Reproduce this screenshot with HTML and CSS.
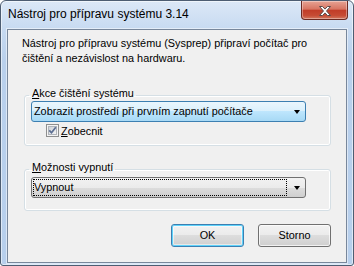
FILE: index.html
```html
<!DOCTYPE html>
<html>
<head>
<meta charset="utf-8">
<link rel="stylesheet" href="styles.css">
</head>
<body>
<div class="window">
  <div class="titlebar">
    <span class="title">Nástroj pro přípravu systému 3.14</span>
    <div class="close">
      <svg width="16" height="12" viewBox="0 0 16 12"><path d="M2.5 1.5h3l2.5 2.6 2.5-2.6h3l-4 4.5 4 4.5h-3l-2.5-2.6-2.5 2.6h-3l4-4.5z" fill="#fff" stroke="#5a4a48" stroke-width="1" stroke-linejoin="round"/></svg>
    </div>
  </div>
  <div class="client">
    <p class="desc">Nástroj pro přípravu systému (Sysprep) připraví počítač pro<br>čištění a nezávislost na hardwaru.</p>
    <fieldset class="group g1">
      <legend><u>A</u>kce čištění systému</legend>
      <div class="combo blue"><span class="ctext">Zobrazit prostředí při prvním zapnutí počítače</span><span class="arrow"></span></div>
      <label class="check">
        <svg class="box" width="13" height="13" viewBox="0 0 13 13">
          <defs><linearGradient id="cb" x1="0" y1="0" x2="1" y2="1"><stop offset="0" stop-color="#cbcfd5"/><stop offset="1" stop-color="#f6f6f6"/></linearGradient></defs>
          <rect x="0.5" y="0.5" width="12" height="12" fill="#f4f4f4" stroke="#8e8f8f"/>
          <rect x="2.5" y="2.5" width="8" height="8" fill="url(#cb)" stroke="#b0b4ba"/>
          <path d="M3.3 6.4l2.2 2.4 4.3-5.6" fill="none" stroke="#5b6e92" stroke-width="1.7"/>
        </svg>
        <span><u>Z</u>obecnit</span>
      </label>
    </fieldset>
    <fieldset class="group g2">
      <legend><u>M</u>ožnosti vypnutí</legend>
      <div class="combo gray"><span class="ctext focus">Vypnout</span><span class="arrow"></span></div>
    </fieldset>
    <div class="buttons">
      <div class="btn default">OK</div>
      <div class="btn">Storno</div>
    </div>
  </div>
</div>
</body>
</html>
```
FILE: styles.css
```css
* { box-sizing: border-box; }
html, body { margin: 0; padding: 0; background: #fff; }
body {
  font-family: "Liberation Sans", Arial, sans-serif;
  font-size: 10.85px;
  color: #000;
}
.window {
  width: 354px;
  height: 266px;
  border: 1px solid #4d5d72;
  border-radius: 6px 6px 3px 3px;
  background: linear-gradient(#dce8f7 0px, #c7daf1 28px, #b9d0ec 60px, #b7cfec 100%);
  box-shadow: inset 0 0 0 1px rgba(255,255,255,0.55);
  display: flex;
  flex-direction: column;
  position: relative;
}
.titlebar {
  height: 28px;
  padding: 6px 0 0 7px;
  line-height: 15px;
  font-size: 12px;
}
.title { color: #000; }
.close {
  position: absolute;
  top: 0;
  right: 5px;
  width: 47px;
  height: 19px;
  border: 1px solid #6b2a22;
  border-top: none;
  border-radius: 0 0 4px 4px;
  background: linear-gradient(#e6a394 0%, #d77562 45%, #c13d28 52%, #c64b34 80%, #d2785f 100%);
  box-shadow: inset 0 0 0 1px rgba(255,255,255,0.35);
  display: flex;
  align-items: center;
  justify-content: center;
}
.close svg { display: block; margin-top: 1px; }
.client {
  margin: 0 6px 2px 6px;
  flex: 1;
  border: 1px solid #78879b;
  background: #f0f0f0;
  display: flex;
  flex-direction: column;
  box-shadow: 0 0 0 1px rgba(255,255,255,0.5);
}
.desc {
  margin: 6px 0 0 14px;
  line-height: 15px;
}
.group {
  margin: 21px 15px 0 16px;
  border: 1px solid #d5dfe5;
  border-radius: 3px;
  padding: 0 0 8px 6px;
  min-width: 0;
  box-shadow: inset 0 0 0 1px #fff;
}
.group legend {
  line-height: 12px;
  height: 16px;
  padding: 0 2px 4px 3px;
  margin-left: -2px;
}
.g1 .combo { margin-top: -2px; }
.g2 { margin-top: 15px; padding-bottom: 12px; }
.combo {
  width: 275px;
  height: 21px;
  border: 1px solid #707070;
  border-radius: 3px;
  display: flex;
  align-items: center;
  padding: 0 4px 0 1px;
}
.combo.blue {
  border-color: #3c7fb1;
  background: linear-gradient(#eaf6fd 0%, #d9f0fc 50%, #bee6fd 50%, #a7d9f5 100%);
}
.combo.gray {
  background: linear-gradient(#f2f2f2 0%, #ebebeb 50%, #dddddd 50%, #cfcfcf 100%);
}
.ctext {
  flex: 1;
  height: 17px;
  line-height: 16px;
  padding-left: 1px;
  margin-right: 2px;
  white-space: nowrap;
  overflow: hidden;
}
.ctext.focus {
  outline: 1px dotted #000;
  outline-offset: -1px;
}
.arrow {
  width: 0;
  height: 0;
  border-left: 3.5px solid transparent;
  border-right: 3.5px solid transparent;
  border-top: 4px solid #000;
  margin: 1px 1px 0 5px;
}
.check {
  display: flex;
  align-items: center;
  gap: 2px;
  margin: 2px 0 0 15px;
  height: 13px;
}
.box { display: block; }
.buttons {
  display: flex;
  justify-content: flex-end;
  gap: 14px;
  margin: 13px 15px 0 0;
}
.btn {
  width: 73px;
  height: 23px;
  border: 1px solid #707070;
  border-radius: 3px;
  background: linear-gradient(#f2f2f2 0%, #ebebeb 50%, #dddddd 50%, #cfcfcf 100%);
  box-shadow: inset 0 0 0 1px rgba(255,255,255,0.7);
  display: flex;
  align-items: center;
  justify-content: center;
  line-height: 15px;
  padding-bottom: 1px;
}
.btn.default {
  border-color: #3c7fb1;
  box-shadow: inset 0 0 0 1px #5fd3fb, inset 0 0 0 2px rgba(255,255,255,0.5);
}
```
